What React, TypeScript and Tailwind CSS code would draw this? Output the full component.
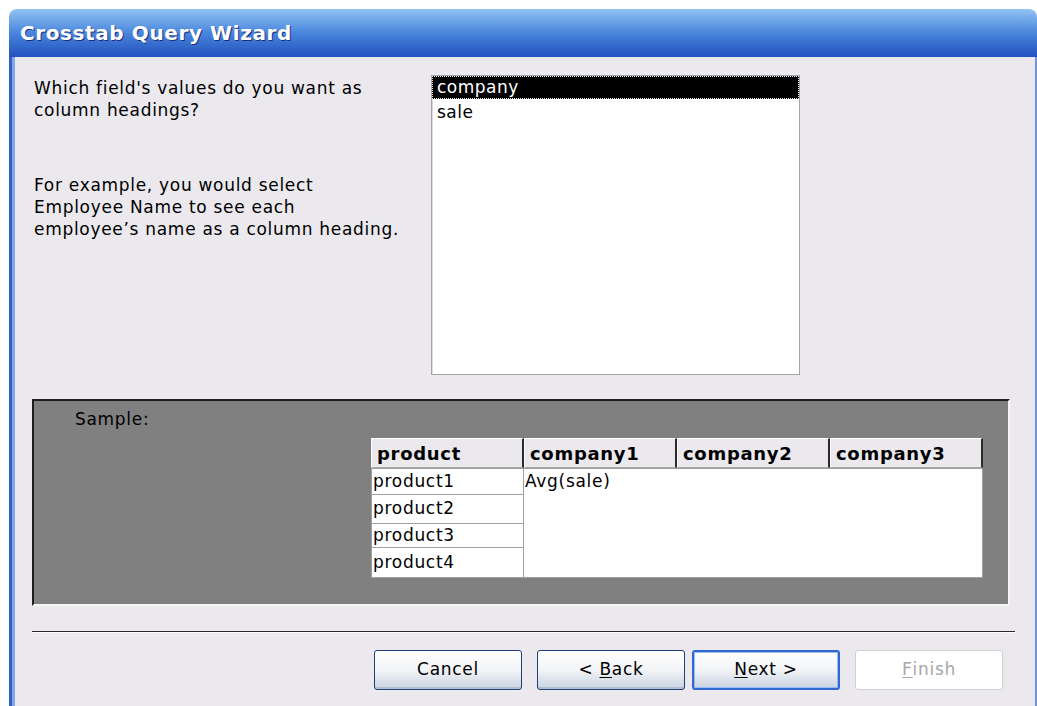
import React from "react";

const font = { fontFamily: '"DejaVu Sans", Verdana, sans-serif' };

const rows = [
  { name: "product1", h: "h-[27px]" },
  { name: "product2", h: "h-[29px]" },
  { name: "product3", h: "h-[24px]" },
  { name: "product4", h: "h-[30px]" },
];

function HeaderCell({ label }: { label: string }) {
  return (
    <div className="w-[153px] h-[30px] bg-[#ebe9ee] border-t border-l border-white border-r-2 border-r-[#2b2b2b] border-b border-b-[#a8a8a8] flex items-center pl-[5px] text-[18px] tracking-[0.7px] font-bold text-black">
      {label}
    </div>
  );
}

function WizardButton({
  label,
  mnemonic,
  rest,
  variant = "normal",
}: {
  label?: string;
  mnemonic?: string;
  rest?: string;
  variant?: "normal" | "default" | "disabled";
}) {
  const base =
    "w-[148px] h-[40px] rounded-[3px] flex items-center justify-center text-[17px] tracking-[0.7px] whitespace-pre";
  const styles = {
    normal:
      "border border-[#1e3f78] bg-gradient-to-b from-white via-[#f2f4f7] to-[#c9d3e2] text-black shadow-[inset_0_-2px_0_#b4c0d4]",
    default:
      "border-2 border-[#3268d2] bg-gradient-to-b from-white via-[#f2f4f7] to-[#c9d3e2] text-black shadow-[inset_0_0_0_1px_#9cbcf0]",
    disabled: "border border-[#cfcfcf] bg-white text-[#a8a8a8]",
  };
  return (
    <button className={`${base} ${styles[variant]}`}>
      {label}
      {mnemonic && <span className="underline underline-offset-2">{mnemonic}</span>}
      {rest}
    </button>
  );
}

export default function App() {
  return (
    <div className="h-[706px] overflow-hidden bg-white pl-[9px] pt-[9px]" style={font}>
      <div className="w-[1028px] h-[700px] flex flex-col rounded-t-[8px] overflow-hidden">
        {/* title bar */}
        <div className="h-[48px] shrink-0 bg-gradient-to-b from-[#92c3f2] via-[#4a85dc] to-[#2350be] flex items-center pl-[11px]">
          <span className="text-white font-bold text-[20px] tracking-[0.6px] [text-shadow:1px_1px_0_#1a2f78]">
            Crosstab Query Wizard
          </span>
        </div>

        {/* dialog body */}
        <div className="flex-1 flex border-l-[3px] border-[#3461c9] border-r-[2px] border-r-[#7393da]">
          <div className="flex-1 flex border-l-[3px] border-[#86a6e2]">
            <div className="flex-1 bg-[#ebe9ee] flex flex-col pl-[17px] pr-[20px] text-black">
              <div className="flex pt-[18px]">
                <div className="w-[399px] pl-[2px] pt-[2px] text-[17px] tracking-[0.7px] leading-[22px]">
                  <p>Which field's values do you want as</p>
                  <p>column headings?</p>
                  <p className="mt-[53px]">For example, you would select</p>
                  <p>Employee Name to see each</p>
                  <p>employee’s name as a column heading.</p>
                </div>
                <div className="w-[369px] h-[300px] bg-white border border-[#a3a3a8] shadow-[inset_1px_1px_0_#dcdcdc] text-[17px] tracking-[0.5px]">
                  <div className="h-[23px] bg-black text-white border border-dotted border-[#e8e8e8] pl-[4px] leading-[20px]">
                    company
                  </div>
                  <div className="pl-[5px] leading-[26px]">sale</div>
                </div>
              </div>

              {/* sample preview */}
              <div className="mt-[24px] w-[978px] h-[207px] bg-[#808080] border-t-2 border-l-2 border-[#1e1e1e] border-b-2 border-r-2 border-b-[#f4f4f4] border-r-[#f4f4f4] flex flex-col">
                <div className="pl-[41px] pt-[8px] text-[17px] tracking-[0.7px] leading-[20px]">Sample:</div>
                <div className="ml-[337px] mt-[9px] flex flex-col w-[612px]">
                  <div className="flex">
                    <HeaderCell label="product" />
                    <HeaderCell label="company1" />
                    <HeaderCell label="company2" />
                    <HeaderCell label="company3" />
                  </div>
                  <div className="flex text-[17px] tracking-[0.7px]">
                    <div className="w-[153px] flex flex-col">
                      {rows.map((r) => (
                        <div
                          key={r.name}
                          className={`${r.h} bg-white border border-[#a0a0a0] border-t-0 first:border-t pl-[1px] flex items-center`}
                        >
                          {r.name}
                        </div>
                      ))}
                    </div>
                    <div className="w-[459px] bg-white border border-[#a0a0a0] border-l-0 pl-[1px] leading-[24px]">
                      Avg(sale)
                    </div>
                  </div>
                </div>
              </div>

              <div className="mt-[25px] h-[2px] bg-[#2a2a2a] border-b border-white" />

              <div className="mt-[17px] flex justify-end pr-[12px]">
                <WizardButton label="Cancel" />
                <div className="ml-[15px]">
                  <WizardButton label="< " mnemonic="B" rest="ack" />
                </div>
                <div className="ml-[7px]">
                  <WizardButton mnemonic="N" rest="ext >" variant="default" />
                </div>
                <div className="ml-[15px]">
                  <WizardButton mnemonic="F" rest="inish" variant="disabled" />
                </div>
              </div>
            </div>
          </div>
        </div>
      </div>
    </div>
  );
}
